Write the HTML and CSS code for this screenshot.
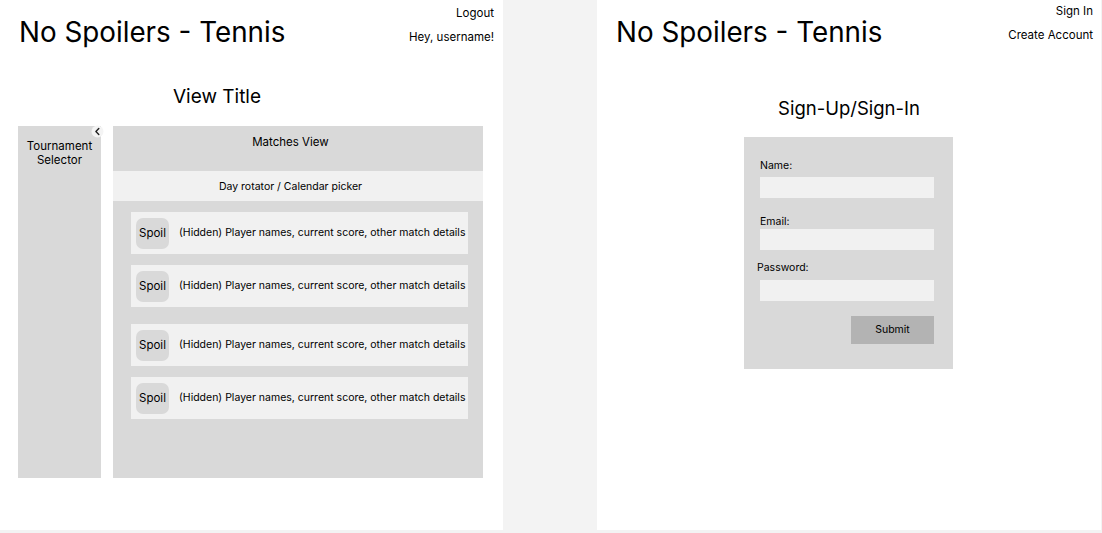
FILE: index.html
```html
<!DOCTYPE html>
<html lang="en">
<head>
<meta charset="utf-8">
<title>No Spoilers - Tennis</title>
<link rel="stylesheet" href="styles.css">
</head>
<body>
<div class="canvas">
  <section class="frame">
    <header class="top">
      <h1 class="brand">No Spoilers - Tennis</h1>
      <nav class="account">
        <a class="account-link" href="#">Logout</a>
        <span class="account-link">Hey, username!</span>
      </nav>
    </header>
    <h2 class="view-title">View Title</h2>
    <div class="workspace">
      <aside class="sidebar">
        <div class="sidebar-label">Tournament<br>Selector</div>
        <button class="collapse" type="button" aria-label="Collapse">
          <svg width="13" height="13" viewBox="0 0 13 13">
            <circle cx="6.5" cy="6.5" r="6" fill="#f4f4f4"/>
            <polyline points="7.8,3.4 4.9,6.5 7.8,9.6" fill="none" stroke="#222" stroke-width="1.4" stroke-linecap="round" stroke-linejoin="round"/>
          </svg>
        </button>
      </aside>
      <main class="matches">
        <div class="matches-head">Matches View</div>
        <div class="day-picker">Day rotator / Calendar picker</div>
        <div class="match-list">
          <div class="match">
            <button class="spoil" type="button">Spoil</button>
            <span class="match-text">(Hidden) Player names, current score, other match details</span>
          </div>
          <div class="match">
            <button class="spoil" type="button">Spoil</button>
            <span class="match-text">(Hidden) Player names, current score, other match details</span>
          </div>
          <div class="match match-spaced">
            <button class="spoil" type="button">Spoil</button>
            <span class="match-text">(Hidden) Player names, current score, other match details</span>
          </div>
          <div class="match">
            <button class="spoil" type="button">Spoil</button>
            <span class="match-text">(Hidden) Player names, current score, other match details</span>
          </div>
        </div>
      </main>
    </div>
  </section>

  <section class="frame frame-auth">
    <header class="top top-auth">
      <h1 class="brand">No Spoilers - Tennis</h1>
      <nav class="account account-auth">
        <a class="account-link" href="#">Sign In</a>
        <a class="account-link" href="#">Create Account</a>
      </nav>
    </header>
    <h2 class="auth-title">Sign-Up/Sign-In</h2>
    <form class="auth-form">
      <label class="field-label">Name:</label>
      <div class="field-input field-name"></div>
      <label class="field-label field-label-email">Email:</label>
      <div class="field-input field-email"></div>
      <label class="field-label field-label-password">Password:</label>
      <div class="field-input field-password"></div>
      <div class="form-actions">
        <button class="submit" type="button">Submit</button>
      </div>
    </form>
  </section>
</div>
</body>
</html>
```

FILE: styles.css
```css
* {
  box-sizing: border-box;
}

html, body {
  margin: 0;
  padding: 0;
}

body {
  background: #f3f3f3;
  font-family: Inter, "Noto Sans", "Liberation Sans", sans-serif;
  color: #000;
}

.canvas {
  display: flex;
  gap: 94px;
  width: 1102px;
  height: 533px;
}

.frame {
  width: 503px;
  height: 530px;
  background: #fff;
}

.frame-auth {
  width: 504px;
}

/* header */
.top {
  display: flex;
  justify-content: space-between;
  align-items: flex-start;
  height: 70px;
  padding: 0 9px 0 19px;
}

.top-auth {
  padding: 0 8px 0 19px;
}

.brand {
  margin: 15px 0 0;
  font-size: 27.8px;
  line-height: 34px;
  font-weight: 400;
  letter-spacing: 0;
}

.account {
  display: flex;
  flex-direction: column;
  align-items: flex-end;
  gap: 9px;
  padding-top: 6px;
}

.account-auth {
  padding-top: 4px;
}

.account-link {
  font-size: 11.5px;
  line-height: 15px;
  color: #000;
  text-decoration: none;
}

/* left frame */
.view-title {
  margin: 15px 0 17px;
  padding-right: 69px;
  text-align: center;
  font-size: 19px;
  line-height: 24px;
  font-weight: 400;
}

.workspace {
  display: flex;
  gap: 12px;
  height: 352px;
  padding-left: 18px;
}

.sidebar {
  position: relative;
  width: 83px;
  background: #d9d9d9;
  padding-top: 13px;
  text-align: center;
}

.sidebar-label {
  font-size: 11.5px;
  line-height: 14px;
}

.collapse {
  position: absolute;
  top: -1px;
  right: -3px;
  width: 13px;
  height: 13px;
  padding: 0;
  border: 0;
  background: none;
  display: block;
}

.collapse svg {
  display: block;
}

.matches {
  width: 370px;
  display: flex;
  flex-direction: column;
  background: #d9d9d9;
}

.matches-head {
  height: 45px;
  padding: 9px 15px 0 0;
  text-align: center;
  font-size: 11.5px;
  line-height: 15px;
}

.day-picker {
  height: 30px;
  padding: 1px 15px 0 0;
  background: #f1f1f1;
  text-align: center;
  font-size: 10.5px;
  line-height: 29px;
}

.match-list {
  flex: 1;
  display: flex;
  flex-direction: column;
  gap: 11px;
  padding: 11px 15px 0 18px;
}

.match {
  display: flex;
  align-items: center;
  gap: 10px;
  height: 42px;
  padding-left: 5px;
  background: #f1f1f1;
}

.match-spaced {
  margin-top: 6px;
}

.spoil {
  width: 33px;
  height: 31px;
  padding: 0;
  border: 0;
  border-radius: 7px;
  background: #d9d9d9;
  font-family: inherit;
  font-size: 11.5px;
  color: #000;
}

.match-text {
  font-size: 10.5px;
  line-height: 13px;
  padding-bottom: 1px;
  white-space: nowrap;
}

/* auth frame */
.auth-title {
  margin: 26px 0 17px;
  text-align: center;
  font-size: 18.5px;
  line-height: 24px;
  font-weight: 400;
}

.auth-form {
  display: flex;
  flex-direction: column;
  width: 209px;
  height: 232px;
  margin: 0 0 0 147px;
  padding: 22px 19px 0 16px;
  background: #d9d9d9;
}

.field-label {
  display: block;
  font-size: 10.5px;
  line-height: 14px;
}

.field-label-email {
  margin-top: 17px;
}

.field-label-password {
  margin-top: 11px;
  margin-left: -3px;
}

.field-input {
  height: 21px;
  background: #f1f1f1;
}

.field-name {
  margin-top: 4px;
}

.field-email {
  margin-top: 0;
}

.field-password {
  margin-top: 5px;
}

.form-actions {
  display: flex;
  justify-content: flex-end;
  margin-top: 15px;
}

.submit {
  width: 83px;
  height: 28px;
  padding: 0 0 2px;
  border: 0;
  background: #b3b3b3;
  font-family: inherit;
  font-size: 10.5px;
  color: #000;
}
```
